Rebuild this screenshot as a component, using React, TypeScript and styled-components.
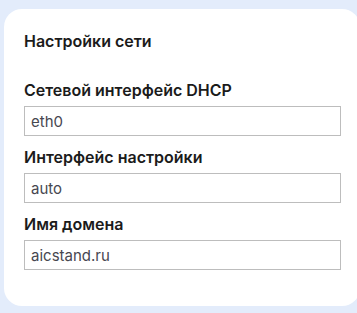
import React from "react";
import styled, { createGlobalStyle } from "styled-components";

const GlobalStyle = createGlobalStyle`
  body {
    margin: 0;
    background: #e3ecfb;
    overflow: hidden;
    font-family: "Inter", "Liberation Sans", sans-serif;
  }
`;

const Page = styled.div`
  width: 357px;
  height: 313px;
  box-sizing: border-box;
  padding: 9px 0 0 4px;
  overflow: hidden;
`;

const Card = styled.section`
  width: 356px;
  box-sizing: border-box;
  background: #ffffff;
  border-radius: 18px;
  padding: 22px 19px 36px 20px;
`;

const Title = styled.h2`
  margin: 0 0 29px;
  font-size: 16px;
  line-height: 20px;
  font-weight: 600;
  color: #1b1b1b;
`;

const Fields = styled.div`
  display: flex;
  flex-direction: column;
  gap: 11px;
`;

const Field = styled.label`
  display: flex;
  flex-direction: column;
  gap: 6px;
`;

const Label = styled.span`
  font-size: 16px;
  line-height: 20px;
  font-weight: 600;
  color: #1b1b1b;
`;

const Input = styled.input`
  box-sizing: border-box;
  height: 30px;
  width: 100%;
  margin: 0;
  padding: 0 6px;
  border: 1px solid #bdbdbd;
  border-radius: 0;
  font-family: inherit;
  font-size: 15px;
  color: #474750;
  background: #fff;
  outline: none;
`;

const fields = [
  { label: "Сетевой интерфейс DHCP", value: "eth0" },
  { label: "Интерфейс настройки", value: "auto" },
  { label: "Имя домена", value: "aicstand.ru" },
];

export default function App() {
  return (
    <>
      <GlobalStyle />
      <Page>
        <Card>
          <Title>Настройки сети</Title>
          <Fields>
            {fields.map((f) => (
              <Field key={f.label}>
                <Label>{f.label}</Label>
                <Input defaultValue={f.value} readOnly />
              </Field>
            ))}
          </Fields>
        </Card>
      </Page>
    </>
  );
}
